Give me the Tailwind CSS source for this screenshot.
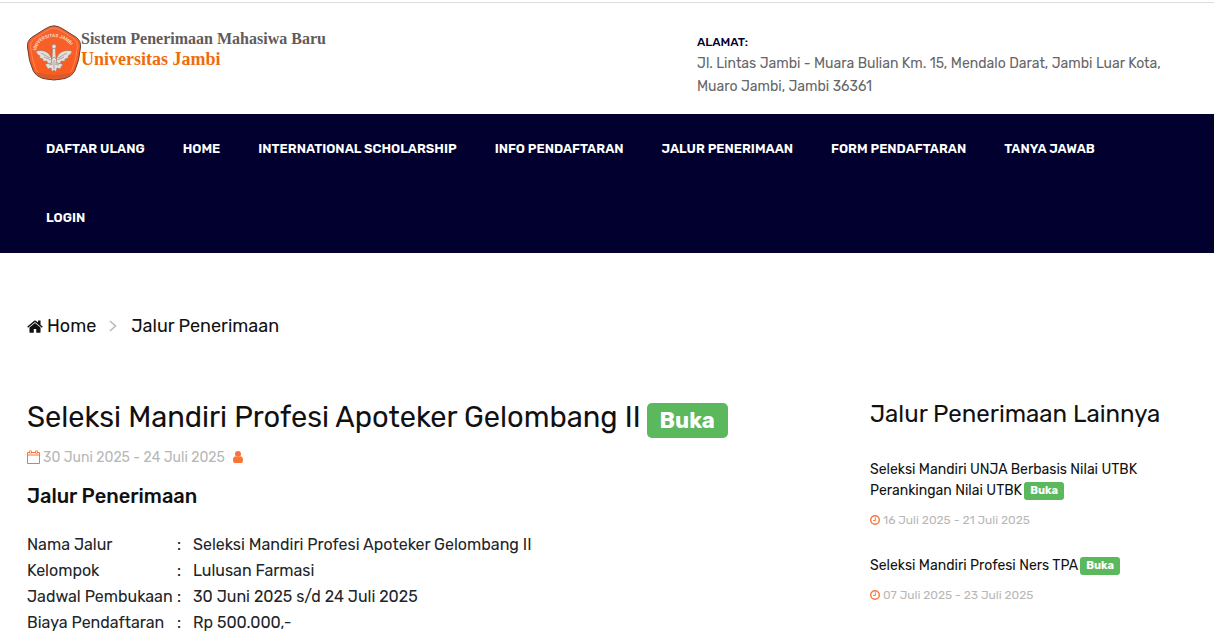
<!DOCTYPE html>
<html lang="id">
<head>
<meta charset="utf-8">
<meta name="viewport" content="width=device-width, initial-scale=1">
<title>Sistem Penerimaan Mahasiwa Baru - Universitas Jambi</title>
<script src="https://cdn.jsdelivr.net/npm/@tailwindcss/browser@4"></script>
</head>
<body class="bg-white font-[Rubik,Roboto,sans-serif] text-[#111111] overflow-x-hidden">
<header>
  <div class="mt-0.5 flex h-28 border-t border-[#dddddd] px-[27px]">
    <a href="#" class="flex w-[670px] shrink-0 items-start pt-[22px]">
      <svg class="h-[56px] w-[54px] shrink-0" viewBox="0 0 54 56" aria-label="Logo Universitas Jambi" role="img">
        <defs>
          <linearGradient id="shield" x1="0" y1="0" x2="0" y2="1"><stop offset="0" stop-color="#f4622f"/><stop offset="1" stop-color="#ff5a1c"/></linearGradient>
          <path id="arc" d="M9 27 C10 7 44 7 46 28"/>
        </defs>
        <path d="M27 .8 Q31 .8 36 4 L49.500 12.500 Q54 16 53.500 22 Q52.500 36 47.500 46.500 Q44.500 51.500 38 53.500 Q27 56.500 16 53.500 Q9.500 51.500 6.500 46.500 Q1.500 36 .5 22 Q0 16 4.500 12.500 L18 4 Q23 .8 27 .8Z" fill="url(#shield)" stroke="#6b4238" stroke-width="1"/>
        <path d="M27 3 Q30 3 34 5.500 L47 14 Q51 17 50.500 22 Q49 35 45 45 Q42 49 37 50.500 Q27 53 17 50.500 Q12 49 9 45 Q5 35 3.500 22 Q3 17 7 14 L20 5.500 Q24 3 27 3Z" fill="none" stroke="#ff8655" stroke-width="1"/>
        <path d="M9 47 Q27 53 45 47 Q43 51 37 52.500 Q27 54.500 17 52.500 Q11 51 9 47Z" fill="#d85b2c"/>
        <text class="font-[Roboto,sans-serif] font-bold" font-size="4.600" fill="#ffd9c4"><textPath href="#arc" startOffset="1">UNIVERSITAS JAMBI</textPath></text>
        <g fill="#e3dfdc" stroke="#8d6a5f" stroke-width=".5">
          <path d="M25 35 C23 28 18 24 9 26 Q9 29 13 31 Q11 33 16 34 Q15 37 20 36 Q20 40 25 38Z"/>
          <path d="M29 35 C31 28 36 24 45 26 Q45 29 41 31 Q43 33 38 34 Q39 37 34 36 Q34 40 29 38Z"/>
          <path d="M25 36 L25.500 23 H28.500 L29 36Z"/>
          <circle cx="27" cy="21.500" r="2.200"/>
          <path d="M27 32 Q31 34 29 38 L36 39 L33 44 L30 43 L29 47 L27 45 L25 47 L24 43 L21 44 L18 39 L25 38 Q23 34 27 32Z"/>
        </g>
        <path d="M14 28 L23 33 M40 28 L31 33 M17 32 L24 35 M37 32 L30 35 M27 35 V44 M22 40 L26 39 M32 40 L28 39" stroke="#9b8b86" stroke-width=".7" fill="none"/>
      </svg>
      <span class="flex flex-col pt-1 font-['Liberation_Serif',serif] text-base leading-5 font-bold whitespace-nowrap">
        <span class="text-[#5f5b5b]">Sistem Penerimaan Mahasiwa Baru</span>
        <span class="text-lg leading-5 text-[#ef6c0c]">Universitas Jambi</span>
      </span>
    </a>
    <address class="pt-[29px] text-sm leading-[23px] text-[#666666] not-italic">
      <strong class="block text-xs leading-5 font-medium text-[#01002e]">ALAMAT:</strong>
      Jl. Lintas Jambi - Muara Bulian Km. 15, Mendalo Darat, Jambi Luar Kota,<br>Muaro Jambi, Jambi 36361
    </address>
  </div>
  <nav class="bg-[#01002e] px-[46px] pb-px text-[13px] leading-[69px] font-semibold text-white">
    <ul class="flex max-w-[1080px] flex-wrap gap-x-[38px] whitespace-nowrap">
      <li><a href="#">DAFTAR ULANG</a></li>
      <li><a href="#">HOME</a></li>
      <li><a href="#">INTERNATIONAL SCHOLARSHIP</a></li>
      <li><a href="#">INFO PENDAFTARAN</a></li>
      <li><a href="#">JALUR PENERIMAAN</a></li>
      <li><a href="#">FORM PENDAFTARAN</a></li>
      <li><a href="#">TANYA JAWAB</a></li>
      <li><a href="#">LOGIN</a></li>
    </ul>
  </nav>
</header>
<div class="flex items-center px-[27px] pt-[60px] text-lg leading-[26px]">
  <a href="#" class="flex items-center gap-1">
    <svg class="h-[13px] w-4" viewBox="0 240 1664 1296" fill="currentColor" aria-hidden="true"><path d="M1408 992v480q0 26-19 45t-45 19h-384v-384h-256v384h-384q-26 0-45-19t-19-45v-480q0-1 .5-3t.5-3l575-474 575 474q1 2 1 6zm223-69l-62 74q-8 9-21 11h-3q-13 0-21-7l-692-577-692 577q-12 8-24 7-13-2-21-11l-62-74q-8-10-7-23.500t11-21.500l719-599q32-26 76-26t76 26l244 204v-195q0-14 9-23t23-9h192q14 0 23 9t9 23v408l219 182q10 8 11 21.500t-7 23.500z"/></svg>
    Home</a>
  <svg class="mr-3.5 ml-[13px] h-3 w-2" viewBox="0 0 8 12" fill="none" stroke="#b7b7b7" stroke-width="1.500" aria-hidden="true"><path d="M1 1 L6.500 6 L1 11"/></svg>
  <a href="#">Jalur Penerimaan</a>
</div>
<div class="flex px-[27px] pt-14">
  <main class="w-[843px] shrink-0">
    <h1 class="flex items-center gap-1.5 text-[29px] leading-10 whitespace-nowrap">Seleksi Mandiri Profesi Apoteker Gelombang II
      <span class="mt-2 rounded-[5px] bg-[#5cb85c] px-[13px] text-[22px] leading-[35px] font-bold text-white">Buka</span></h1>
    <p class="mt-1.5 flex items-center text-sm leading-[28px] text-[#b7b7b7]">
      <svg class="mr-[3px] mb-0.5 h-3.5 w-[13px]" viewBox="0 0 13 14" fill="none" stroke="#fa7438" aria-hidden="true"><path d="M.5 2.500H12.500V13.500H.5Z M.5 5H12.500"/><path d="M3.500 .5V3.500 M9.500 .5V3.500" stroke-width="2.500"/><path d="M3.500 1V3 M9.500 1V3" stroke="#fff" stroke-width=".7"/></svg>
      30 Juni 2025 - 24 Juli 2025
      <svg class="mb-0.5 ml-2 h-3 w-2.5" viewBox="0 0 10 12" fill="#fa7438" aria-hidden="true"><circle cx="5" cy="3" r="3"/><path d="M2.300 5.200Q0 5.500 0 9.500Q0 12 2 12H8Q10 12 10 9.500Q10 5.500 7.700 5.200Q5 7.500 2.300 5.200Z"/></svg>
    </p>
    <h2 class="mt-2.5 text-xl leading-[28px] font-medium">Jalur Penerimaan</h2>
    <table class="mt-[22px] text-base leading-[26px] text-[#212529]">
      <tbody>
        <tr><td class="w-[150px] p-0">Nama Jalur</td><td class="w-4 p-0">:</td><td class="p-0">Seleksi Mandiri Profesi Apoteker Gelombang II</td></tr>
        <tr><td class="p-0">Kelompok</td><td class="p-0">:</td><td class="p-0">Lulusan Farmasi</td></tr>
        <tr><td class="p-0">Jadwal Pembukaan</td><td class="p-0">:</td><td class="p-0">30 Juni 2025 s/d 24 Juli 2025</td></tr>
        <tr><td class="p-0">Biaya Pendaftaran</td><td class="p-0">:</td><td class="p-0">Rp 500.000,-</td></tr>
      </tbody>
    </table>
  </main>
  <aside class="min-w-0 flex-1">
    <h2 class="text-2xl leading-[38px] whitespace-nowrap">Jalur Penerimaan Lainnya</h2>
    <article class="mt-[26px]">
      <h3 class="text-sm leading-[21px]"><a href="#">Seleksi Mandiri UNJA Berbasis Nilai UTBK<br>Perankingan Nilai UTBK <span class="-ml-px inline-block rounded-[3px] bg-[#5cb85c] px-1.5 align-middle text-[11px] leading-[18px] font-bold text-white">Buka</span></a></h3>
      <p class="mt-[9px] flex items-center gap-[3px] text-xs leading-5 text-[#b7b7b7]">
        <svg class="h-2.5 w-2.5" viewBox="0 0 10 10" fill="none" stroke="#fa7438" stroke-width="1.400" aria-hidden="true"><circle cx="5" cy="5" r="4.300"/><path d="M5.300 2.300V5.500H3.200" stroke-width="1"/></svg>
        16 Juli 2025 - 21 Juli 2025</p>
    </article>
    <article class="mt-[25px]">
      <h3 class="text-sm leading-[21px]"><a href="#">Seleksi Mandiri Profesi Ners TPA <span class="-ml-px inline-block rounded-[3px] bg-[#5cb85c] px-1.5 align-middle text-[11px] leading-[18px] font-bold text-white">Buka</span></a></h3>
      <p class="mt-[9px] flex items-center gap-[3px] text-xs leading-5 text-[#b7b7b7]">
        <svg class="h-2.5 w-2.5" viewBox="0 0 10 10" fill="none" stroke="#fa7438" stroke-width="1.400" aria-hidden="true"><circle cx="5" cy="5" r="4.300"/><path d="M5.300 2.300V5.500H3.200" stroke-width="1"/></svg>
        07 Juli 2025 - 23 Juli 2025</p>
    </article>
  </aside>
</div>
</body>
</html>
